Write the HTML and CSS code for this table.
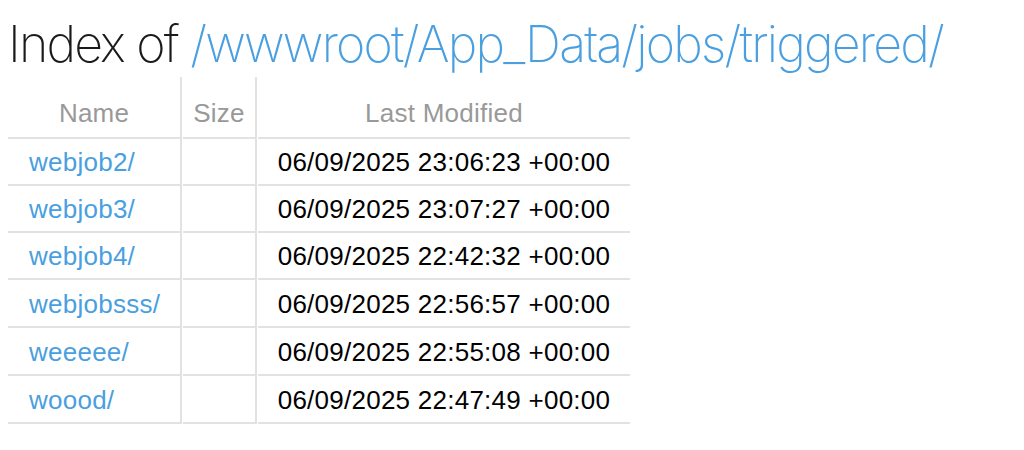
FILE: index.html
```html
<!DOCTYPE html>
<html>
<head>
<meta charset="utf-8">
<title>Index of /wwwroot/App_Data/jobs/triggered/</title>
<link rel="stylesheet" href="styles.css">
</head>
<body>
<h1 class="title">Index of <a class="path" href="#">/wwwroot/App_Data/jobs/triggered/</a></h1>
<table class="listing">
  <thead>
    <tr><th class="col-name">Name</th><th class="col-size">Size</th><th class="col-date">Last Modified</th></tr>
  </thead>
  <tbody>
    <tr><td class="col-name"><a href="#">webjob2/</a></td><td class="col-size"></td><td class="col-date">06/09/2025 23:06:23 +00:00</td></tr>
    <tr><td class="col-name"><a href="#">webjob3/</a></td><td class="col-size"></td><td class="col-date">06/09/2025 23:07:27 +00:00</td></tr>
    <tr><td class="col-name"><a href="#">webjob4/</a></td><td class="col-size"></td><td class="col-date">06/09/2025 22:42:32 +00:00</td></tr>
    <tr><td class="col-name"><a href="#">webjobsss/</a></td><td class="col-size"></td><td class="col-date">06/09/2025 22:56:57 +00:00</td></tr>
    <tr><td class="col-name"><a href="#">weeeee/</a></td><td class="col-size"></td><td class="col-date">06/09/2025 22:55:08 +00:00</td></tr>
    <tr><td class="col-name"><a href="#">woood/</a></td><td class="col-size"></td><td class="col-date">06/09/2025 22:47:49 +00:00</td></tr>
  </tbody>
</table>
</body>
</html>
```
FILE: styles.css
```css
html, body {
  background: #ffffff;
}
body {
  margin: 8px;
  font-family: "Liberation Sans", Arial, sans-serif;
  color: #000;
}
a {
  color: #4a9fe0;
  text-decoration: none;
}
.title {
  margin: 6px 0 3px 0;
  font-family: Inter, "Liberation Sans", sans-serif;
  font-weight: 150;
  font-size: 50px;
  line-height: 60px;
  color: #1a1a1a;
  letter-spacing: -1.8px;
}
.listing {
  border-collapse: separate;
  border-spacing: 1px 0;
  margin-left: -1px;
  font-size: 26px;
  line-height: 30px;
  letter-spacing: 0.25px;
}
.listing th {
  font-weight: normal;
  color: #999;
  text-align: center;
  padding: 21px 10px 9px;
  border-bottom: 2px solid #e2e2e2;
}
.listing td {
  padding: 8px 20px 7px;
  border-bottom: 2px solid #e2e2e2;
  white-space: nowrap;
}
.listing .col-name,
.listing .col-size {
  border-right: 2px solid #e2e2e2;
}
.listing th.col-name {
  width: 152px;
}
.listing th.col-size {
  width: 51px;
}
.listing td.col-name {
  padding-left: 21px;
}
.listing tbody tr:nth-child(n+4) td {
  padding-top: 9px;
}
```
